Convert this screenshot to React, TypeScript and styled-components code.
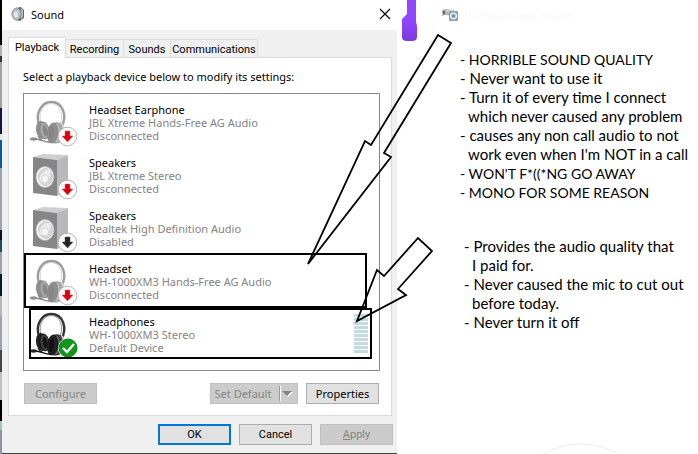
import React from "react";
import styled, { createGlobalStyle, css } from "styled-components";

const Global = createGlobalStyle`
  *, *::after { box-sizing: border-box; }
  body { margin: 0; background: #fff; }
  button { font: inherit; }
`;

const Page = styled.main`
  position: relative;
  display: grid;
  grid-template-columns: 2px minmax(0, 395fr) minmax(0, 301fr);
  min-height: 100vh;
  overflow: hidden;
  background: #fff;
  font-family: "Noto Sans", "Open Sans", sans-serif;
  font-size: 11px;
  line-height: 13px;
  color: #000;
`;

const DesktopEdge = styled.div`
  background: linear-gradient(
    #000 0 45px, #b5b0aa 45px 56px, #333 56px 62px, #a5a09a 62px 108px,
    #14164a 108px 134px, #e0e4e8 134px 140px, #0a5a96 140px 168px,
    #98a2b2 168px 230px, #04181c 230px 240px, #1c5054 240px 252px,
    #98a2b2 252px 274px, #041c24 274px 296px, #b8b8b8 296px 316px,
    #98a2b2 316px 350px, #444 350px 372px, #c0c0c0 372px 400px,
    #000 400px 421px, #a0c8b0 421px 430px, #8a93a0 430px
  );
`;

const Dialog = styled.section`
  display: flex;
  flex-direction: column;
  background: #f0f0f0;
  border-bottom: 1px solid #444;
`;

const TitleBar = styled.header`
  display: flex;
  align-items: center;
  gap: 6px;
  height: 30px;
  padding: 0 6px 2px 9px;
  background: #fff;
`;

const Title = styled.h1`
  flex: 1;
  margin: 0;
  font-size: 11px;
  font-weight: 400;
`;

const CloseButton = styled.button`
  display: flex;
  padding: 0;
  border: 0;
  background: none;
`;

const Tabs = styled.div`
  display: flex;
  align-items: flex-end;
  height: 27px;
  padding-left: 6px;
  font-family: Roboto, sans-serif;
`;

const Tab = styled.button<{ $active?: boolean; $width: number }>`
  width: ${(p) => p.$width}px;
  height: 18px;
  padding: 1px 0 0;
  border: 1px solid #dcdcdc;
  border-width: 1px 1px 0 0;
  background: #f0f0f0;
  color: #000;
  white-space: nowrap;
  ${(p) =>
    p.$active &&
    css`
      position: relative;
      height: 21px;
      margin-bottom: -1px;
      padding-bottom: 2px;
      border-left-width: 1px;
      background: #fff;
    `}
`;

const Panel = styled.div`
  margin: 0 5px 0 6px;
  padding: 12px 11px 11px 14px;
  border: 1px solid #dcdcdc;
  background: #fff;
`;

const Prompt = styled.p`
  margin: 0 0 10px;
`;

const DeviceList = styled.ul`
  margin: 0;
  padding: 3px 0 8px;
  border: 1px solid #828790;
  list-style: none;
`;

const outlines = {
  headset: "top: -3px; left: 0; right: 12px; height: 55px;",
  headphones: "top: -1px; left: 5px; right: 7px; height: 51px;",
};

const Device = styled.li<{ $outline?: keyof typeof outlines }>`
  position: relative;
  display: flex;
  gap: 11px;
  height: 53px;
  padding: 3px 11px 0 6px;
  ${(p) =>
    p.$outline &&
    css`
      &::after {
        content: "";
        position: absolute;
        border: 2px solid #000;
        ${outlines[p.$outline]}
      }
    `}
`;

const DeviceText = styled.div`
  flex: 1;
  padding-top: 3px;
  color: #838383;
  white-space: nowrap;
`;

const DeviceName = styled.div`
  color: #000;
`;

const Meter = styled.div`
  display: grid;
  grid-auto-rows: 3px;
  gap: 1px;
  width: 14px;
  padding-top: 2px;
`;

const MeterBar = styled.span`
  background: #c1dbe1;
`;

const ButtonRow = styled.div`
  display: flex;
  justify-content: flex-end;
  gap: 8px;
`;

const PanelButtons = styled(ButtonRow)`
  padding: 12px 1px 0;
`;

const DialogButtons = styled(ButtonRow)`
  padding: 8px 4px;
  font-family: Roboto, sans-serif;
`;

const Button = styled.button<{ $look?: "primary"; $first?: boolean; $split?: boolean }>`
  display: flex;
  align-items: center;
  justify-content: center;
  width: ${(p) => (p.$split ? 88 : 73)}px;
  height: 21px;
  margin-right: ${(p) => (p.$first ? "auto" : "0")};
  padding: 0;
  border: ${(p) => (p.$look === "primary" ? "2px solid #0078d7" : "1px solid #adadad")};
  background: #e1e1e1;
  color: #000;
  white-space: nowrap;
  &:disabled {
    border-color: #bfbfbf;
    background: #ccc;
    color: #838383;
  }
`;

const SplitArrow = styled.svg`
  margin-left: 8px;
`;

const Notes = styled.aside`
  display: flex;
  flex-direction: column;
  font-family: Lato, "Open Sans", sans-serif;
  font-size: 15px;
  line-height: 19px;
  white-space: nowrap;
`;

const Crumb = styled.div`
  display: flex;
  align-items: center;
  gap: 5px;
  height: 30px;
  margin-left: 36px;
  padding-left: 8px;
  border-left: 1px solid #fafafa;
  color: #f8f8f8;
  font-family: "Noto Sans", sans-serif;
  font-size: 11px;
`;

const NoteList = styled.ul<{ $second?: boolean }>`
  margin: 0;
  padding: ${(p) => (p.$second ? "35px 0 0 67px" : "20px 0 0 63px")};
  list-style: none;
`;

const Note = styled.li<{ $caps?: boolean }>`
  padding-left: 8px;
  text-indent: -8px;
  font-size: ${(p) => (p.$caps ? 14 : 15)}px;
`;

const NoteLine = styled.span`
  display: block;
  text-indent: 0;
`;

const Drawing = styled.svg`
  position: absolute;
  top: 0;
  left: 0;
  pointer-events: none;
`;

type BadgeKind = "disconnected" | "disabled" | "default";

function Badge({ kind }: { kind: BadgeKind }) {
  if (kind === "default")
    return (
      <g>
        <circle cx="38" cy="36" r="10" fill="#fff" />
        <circle cx="38" cy="36" r="9" fill="#109618" stroke="#0a7d12" />
        <path d="M33 36l4 4 7-8" fill="none" stroke="#fff" strokeWidth="2.4" />
      </g>
    );
  return (
    <g>
      <circle cx="37.5" cy="36.5" r="9.3" fill="#fff" stroke="#b5b5b5" />
      <path
        d="M35 31h5v5h3l-5.500 6-5.500-6h3z"
        fill={kind === "disabled" ? "#222" : "#d8000c"}
        stroke={kind === "disabled" ? "#555" : "#ef5a60"}
        strokeWidth=".5"
      />
    </g>
  );
}

function HeadsetIcon({ dark, badge }: { dark?: boolean; badge: BadgeKind }) {
  const c = dark
    ? { band: "#333", edge: "#111", cup: "#222", pad: "#3c3c3c", hi: "#888" }
    : { band: "#9c9c9c", edge: "#868686", cup: "#8e8e8e", pad: "#a6a6a6", hi: "#cfcfcf" };
  return (
    <svg width="48" height="48" viewBox="0 0 48 48" aria-hidden="true">
      <path d="M9 24C5 13 12 2 21 2c12 0 17 14 10 26" fill="none" stroke={c.band} strokeWidth="2.400" />
      <path d="M11 23C8 13 13 4 21 3.500c9 0 13 11 9 21" fill="none" stroke={c.hi} strokeWidth=".9" />
      <path d="M4 39c6 0 9 3 18 3.500M8 36c2 4 6 6 12 6" fill="none" stroke={c.edge} strokeWidth="1.300" />
      <ellipse cx="3.500" cy="39" rx="3.500" ry="1.700" fill={c.cup} />
      <ellipse cx="11.500" cy="30" rx="5.500" ry="9" fill={c.cup} transform="rotate(-8 11.500 30)" />
      <ellipse cx="14.500" cy="30.500" rx="4.500" ry="8.500" fill={c.pad} stroke={c.edge} strokeWidth=".8" transform="rotate(-8 14.500 30.500)" />
      <ellipse cx="15" cy="30.500" rx="2" ry="5.500" fill={c.edge} transform="rotate(-8 15 30.500)" />
      <path d="M23 23c6-2 10 1 11 5l-2 12c-2 4-6 4-10 3z" fill={c.pad} />
      <path d="M32 24c3 4 3 12 0 17" fill="none" stroke="#d8d8d8" strokeWidth="2" />
      <ellipse cx="22.500" cy="33" rx="5" ry="10" fill={c.cup} stroke={c.edge} strokeWidth=".8" transform="rotate(7 22.500 33)" />
      <path d="M27 24c3 4 3 13-1 18" fill="none" stroke={c.hi} strokeWidth=".8" />
      <ellipse cx="21.500" cy="33" rx="2.500" ry="7" fill={c.edge} transform="rotate(7 21.500 33)" />
      <Badge kind={badge} />
    </svg>
  );
}

function SpeakerIcon({ badge }: { badge: BadgeKind }) {
  return (
    <svg width="48" height="48" viewBox="0 0 48 48" aria-hidden="true">
      <path d="M3 4l10-3 25 1-11 5z" fill="#cfcfd2" />
      <path d="M27 7l11-5v36l-11 5z" fill="#b9b9bc" />
      <path d="M3 4l24 3v36L3 40z" fill="#868686" />
      <ellipse cx="15" cy="24" rx="9" ry="10.500" fill="#fafafa" stroke="#b4b4b4" strokeWidth=".8" />
      <ellipse cx="15.500" cy="24" rx="7" ry="8.500" fill="#d6d6d9" stroke="#c4c4c6" strokeWidth=".8" />
      <path d="M9 27c1-6 6-11 11-10 2 4-1 10-5 12-3 1-5 0-6-2z" fill="#ebebed" />
      <ellipse cx="15" cy="26" rx="3.500" ry="4" fill="#f6f6f6" stroke="#c9c9c9" strokeWidth=".6" />
      <Badge kind={badge} />
    </svg>
  );
}

type DeviceInfo = {
  name: string;
  model: string;
  status: string;
  icon: React.ReactNode;
  outline?: keyof typeof outlines;
  meter?: boolean;
};

const devices: DeviceInfo[] = [
  { name: "Headset Earphone", model: "JBL Xtreme Hands-Free AG Audio", status: "Disconnected", icon: <HeadsetIcon badge="disconnected" /> },
  { name: "Speakers", model: "JBL Xtreme Stereo", status: "Disconnected", icon: <SpeakerIcon badge="disconnected" /> },
  { name: "Speakers", model: "Realtek High Definition Audio", status: "Disabled", icon: <SpeakerIcon badge="disabled" /> },
  { name: "Headset", model: "WH-1000XM3 Hands-Free AG Audio", status: "Disconnected", icon: <HeadsetIcon badge="disconnected" />, outline: "headset" },
  { name: "Headphones", model: "WH-1000XM3 Stereo", status: "Default Device", icon: <HeadsetIcon dark badge="default" />, outline: "headphones", meter: true },
];

export default function App() {
  return (
    <Page>
      <Global />
      <DesktopEdge />
      <Dialog aria-label="Sound">
        <TitleBar>
          <svg width="14" height="15" viewBox="0 0 14 15" aria-hidden="true">
            <path d="M5 1l5-1 3 3v8l-4 3-4-1z" fill="#666" />
            <path d="M10 1l2 2v7l-2 3z" fill="#bbb" />
            <ellipse cx="5.500" cy="7" rx="4.500" ry="6" fill="#b8c0c4" stroke="#8b9296" />
            <ellipse cx="5" cy="7.500" rx="2" ry="3" fill="#e2e9ec" />
          </svg>
          <Title>Sound</Title>
          <CloseButton aria-label="Close">
            <svg width="12" height="12" viewBox="0 0 12 12" aria-hidden="true">
              <path d="M1 1l10 10M11 1L1 11" stroke="#000" strokeWidth="1.100" />
            </svg>
          </CloseButton>
        </TitleBar>
        <Tabs role="tablist">
          <Tab role="tab" aria-selected $active $width={58}>Playback</Tab>
          <Tab role="tab" $width={58}>Recording</Tab>
          <Tab role="tab" $width={47}>Sounds</Tab>
          <Tab role="tab" $width={87}>Communications</Tab>
        </Tabs>
        <Panel role="tabpanel">
          <Prompt>Select a playback device below to modify its settings:</Prompt>
          <DeviceList>
            {devices.map((d, i) => (
              <Device key={i} $outline={d.outline}>
                {d.icon}
                <DeviceText>
                  <DeviceName>{d.name}</DeviceName>
                  <div>{d.model}</div>
                  <div>{d.status}</div>
                </DeviceText>
                {d.meter && (
                  <Meter>
                    {Array.from({ length: 10 }, (_, n) => (
                      <MeterBar key={n} />
                    ))}
                  </Meter>
                )}
              </Device>
            ))}
          </DeviceList>
          <PanelButtons>
            <Button disabled $first>Configure</Button>
            <Button disabled $split>
              Set Default
              <SplitArrow width="14" height="17" viewBox="0 0 14 17" aria-hidden="true">
                <path d="M.5 1v15" stroke="#999" />
                <path d="M1.500 1v15" stroke="#fff" />
                <path d="M4 7h10l-5 5z" fill="#fff" />
                <path d="M3 6h10l-5 5z" fill="#838383" />
              </SplitArrow>
            </Button>
            <Button>Properties</Button>
          </PanelButtons>
        </Panel>
        <DialogButtons>
          <Button $look="primary">OK</Button>
          <Button>Cancel</Button>
          <Button disabled><span><u>A</u>pply</span></Button>
        </DialogButtons>
      </Dialog>
      <Notes>
        <Crumb>
          <svg width="17" height="12" viewBox="0 0 17 12" aria-hidden="true">
            <path d="M0 1l3-1 9 1v6l-9-1-3 1z" fill="#b4b4b4" />
            <path d="M1 2h2v3H1z" fill="#666" />
            <path d="M4 2h7" stroke="#eee" />
            <rect x="7" y="2" width="9" height="10" rx="1" fill="#8fa0af" />
            <circle cx="11.500" cy="7" r="3.200" fill="#b8ccd9" stroke="#e9f1f6" />
            <circle cx="11.500" cy="7" r="1.200" fill="#5f7488" />
          </svg>
          Hardware and Sound
        </Crumb>
        <NoteList>
          <Note $caps>- HORRIBLE SOUND QUALITY</Note>
          <Note>- Never want to use it</Note>
          <Note>
            - Turn it of every time I connect
            <NoteLine>which never caused any problem</NoteLine>
          </Note>
          <Note>
            - causes any non call audio to not
            <NoteLine>work even when I'm NOT in a call</NoteLine>
          </Note>
          <Note $caps>- WON'T F*((*NG GO AWAY</Note>
          <Note $caps>- MONO FOR SOME REASON</Note>
        </NoteList>
        <NoteList $second>
          <Note>
            - Provides the audio quality that
            <NoteLine>I paid for.</NoteLine>
          </Note>
          <Note>
            - Never caused the mic to cut out
            <NoteLine>before today.</NoteLine>
          </Note>
          <Note>- Never turn it off</Note>
        </NoteList>
      </Notes>
      <Drawing width="698" height="454" viewBox="0 0 698 454" aria-hidden="true">
        <defs>
          <linearGradient id="marker" x1="0" y1="0" x2="0" y2="1">
            <stop offset=".5" stopColor="#9146ff" />
            <stop offset="1" stopColor="#7a3ae0" />
          </linearGradient>
        </defs>
        <path d="M407 0h9v22l1 4v11q0 4-5 4h-5q-5 0-5-4V19l5-5z" fill="url(#marker)" />
        <g fill="none" stroke="#000" strokeWidth="1.800">
          <path d="M308 264L365 141l6 4L438 35l13 8-67 110 7 4z" />
          <path d="M357 321l20-51 7 6 34-38 14 13-34 38 8 6z" />
        </g>
        <circle cx="581" cy="520" r="76" fill="none" stroke="#ececf5" />
      </Drawing>
    </Page>
  );
}
